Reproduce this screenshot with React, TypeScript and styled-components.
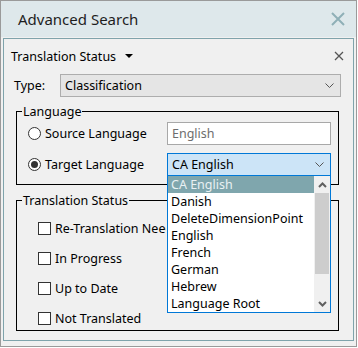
import React from 'react'
import styled, { createGlobalStyle } from 'styled-components'

const GlobalStyle = createGlobalStyle`
  html, body {
    margin: 0;
    padding: 0;
    background: #ffffff;
  }
  body {
    font-family: "Segoe UI", "Noto Sans", sans-serif;
    font-size: 12.5px;
    color: #000;
  }
  * { box-sizing: border-box; }
`

const Window = styled.div`
  width: 357px;
  height: 347px;
  border: 1px solid #9a9a9a;
  background: #f0f0f0;
  display: flex;
  flex-direction: column;
  padding: 0 2px 5px 2px;
`

const TitleBar = styled.div`
  height: 36px;
  margin: 0 -2px 1px -2px;
  background: #dee8eb;
  display: flex;
  align-items: center;
  justify-content: space-between;
  padding: 0 11px 0 17px;
  font-size: 15px;
  color: #1e1e1e;
`

const Panel = styled.div`
  flex: 1;
  border: 1px solid #7fa3ab;
  background: #f0f0f0;
  display: flex;
  flex-direction: column;
  padding: 7px 0 0 0;
`

const PanelHeader = styled.div`
  height: 20px;
  display: flex;
  align-items: center;
  justify-content: space-between;
  padding: 0 9px 0 7px;
`

const HeaderTitle = styled.div`
  display: flex;
  align-items: center;
  gap: 9px;
`

const TypeRow = styled.div`
  margin: 8px 12px 0 10px;
  display: grid;
  grid-template-columns: 46px 1fr;
  align-items: center;
`

const ComboBox = styled.div<{ focused?: boolean }>`
  height: 23px;
  border: 1px solid ${p => (p.focused ? '#0078d7' : '#adadad')};
  background: ${p => (p.focused ? '#cce4f7' : '#e5e5e5')};
  display: flex;
  align-items: center;
  justify-content: space-between;
  padding: 0 6px 0 4px;
  position: relative;
`

const Group = styled.fieldset<{ offset: number }>`
  margin: ${p => p.offset}px 14px 0 12px;
  border: 1px solid #000;
  padding: 0;
  display: flex;
  flex-direction: column;
  min-width: 0;
`

const Legend = styled.legend`
  margin-left: 5px;
  padding: 0 1px;
  line-height: 17px;
  height: 17px;
`

const LangRows = styled.div`
  display: grid;
  grid-template-columns: 150px 164px;
  row-gap: 8px;
  padding: 2px 0 8px 0;
`

const RadioLabel = styled.label`
  display: flex;
  align-items: center;
  gap: 4px;
  padding-left: 11px;
`

const Radio = styled.span<{ checked?: boolean }>`
  width: 13px;
  height: 13px;
  border-radius: 50%;
  border: 1px solid #333;
  background: #fff;
  display: flex;
  align-items: center;
  justify-content: center;
  &::after {
    content: '';
    width: 7px;
    height: 7px;
    border-radius: 50%;
    background: ${p => (p.checked ? '#333' : 'transparent')};
  }
`

const TextInput = styled.div`
  height: 23px;
  border: 1px solid #a8a8a8;
  background: #fff;
  color: #6d6d6d;
  display: flex;
  align-items: center;
  padding-left: 4px;
`

const DropList = styled.div`
  position: absolute;
  left: -1px;
  top: 100%;
  width: 164px;
  height: 138px;
  border: 1px solid #0078d7;
  background: #fff;
  display: flex;
  z-index: 5;
`

const Items = styled.div`
  flex: 1;
  display: flex;
  flex-direction: column;
`

const Item = styled.div<{ selected?: boolean }>`
  height: 17px;
  line-height: 17px;
  padding-left: 3px;
  white-space: nowrap;
  background: ${p => (p.selected ? '#7fa6ad' : 'transparent')};
  color: ${p => (p.selected ? '#e9f1f3' : '#000')};
`

const ScrollBar = styled.div`
  width: 16px;
  background: #f0f0f0;
  display: flex;
  flex-direction: column;
`

const ScrollArrow = styled.div`
  height: 17px;
  display: flex;
  align-items: center;
  justify-content: center;
`

const Thumb = styled.div`
  height: 81px;
  margin: 0 1px;
  background: #cdcdcd;
`

const Track = styled.div`
  flex: 1;
`

const StatusRows = styled.div`
  display: flex;
  flex-direction: column;
  gap: 13px;
  padding: 11px 0 3px 21px;
`

const CheckRow = styled.label`
  display: flex;
  align-items: center;
  gap: 4px;
  height: 17px;
  white-space: nowrap;
`

const CheckText = styled.span<{ clip?: number }>`
  overflow: hidden;
  max-width: ${p => (p.clip ? `${p.clip}px` : 'none')};
`

const Check = styled.span`
  width: 13px;
  height: 13px;
  flex-shrink: 0;
  border: 1px solid #333;
  background: #fff;
`

const Chevron = () => (
  <svg width="9" height="5" viewBox="0 0 9 5">
    <path d="M0.5 0.5 L4.5 4.5 L8.5 0.5" fill="none" stroke="#555" strokeWidth="1" />
  </svg>
)

const ScrollChevron = ({ up }: { up?: boolean }) => (
  <svg width="9" height="6" viewBox="0 0 9 6">
    <path
      d={up ? 'M1 5 L4.5 1.5 L8 5' : 'M1 1 L4.5 4.5 L8 1'}
      fill="none"
      stroke="#606060"
      strokeWidth="2"
    />
  </svg>
)

const languages = [
  'CA English',
  'Danish',
  'DeleteDimensionPoint',
  'English',
  'French',
  'German',
  'Hebrew',
  'Language Root',
]

// the first label runs under the open language list
const statuses = [
  { label: 'Re-Translation Needed', clip: 111 },
  { label: 'In Progress' },
  { label: 'Up to Date' },
  { label: 'Not Translated' },
]

export default function App() {
  return (
    <>
      <GlobalStyle />
      <Window>
        <TitleBar>
          <span>Advanced Search</span>
          <svg width="14" height="14" viewBox="0 0 14 14">
            <path d="M1 1 L13 13 M13 1 L1 13" stroke="#8fb0b7" strokeWidth="2" />
          </svg>
        </TitleBar>
        <Panel>
          <PanelHeader>
            <HeaderTitle>
              <span>Translation Status</span>
              <svg width="8" height="4" viewBox="0 0 8 4">
                <path d="M0 0 L8 0 L4 4 Z" fill="#000" />
              </svg>
            </HeaderTitle>
            <svg width="10" height="10" viewBox="0 0 10 10">
              <path d="M1 1 L9 9 M9 1 L1 9" stroke="#555" strokeWidth="1.3" />
            </svg>
          </PanelHeader>

          <TypeRow>
            <span>Type:</span>
            <ComboBox>
              <span>Classification</span>
              <Chevron />
            </ComboBox>
          </TypeRow>

          <Group offset={6}>
            <Legend>Language</Legend>
            <LangRows>
              <RadioLabel>
                <Radio />
                <span>Source Language</span>
              </RadioLabel>
              <TextInput>English</TextInput>
              <RadioLabel>
                <Radio checked />
                <span>Target Language</span>
              </RadioLabel>
              <ComboBox focused>
                <span>CA English</span>
                <Chevron />
                <DropList>
                  <Items>
                    {languages.map((l, i) => (
                      <Item key={l} selected={i === 0}>
                        {l}
                      </Item>
                    ))}
                  </Items>
                  <ScrollBar>
                    <ScrollArrow>
                      <ScrollChevron up />
                    </ScrollArrow>
                    <Thumb />
                    <Track />
                    <ScrollArrow>
                      <ScrollChevron />
                    </ScrollArrow>
                  </ScrollBar>
                </DropList>
              </ComboBox>
            </LangRows>
          </Group>

          <Group offset={7}>
            <Legend>Translation Status</Legend>
            <StatusRows>
              {statuses.map(s => (
                <CheckRow key={s.label}>
                  <Check />
                  <CheckText clip={s.clip}>{s.label}</CheckText>
                </CheckRow>
              ))}
            </StatusRows>
          </Group>
        </Panel>
      </Window>
    </>
  )
}
